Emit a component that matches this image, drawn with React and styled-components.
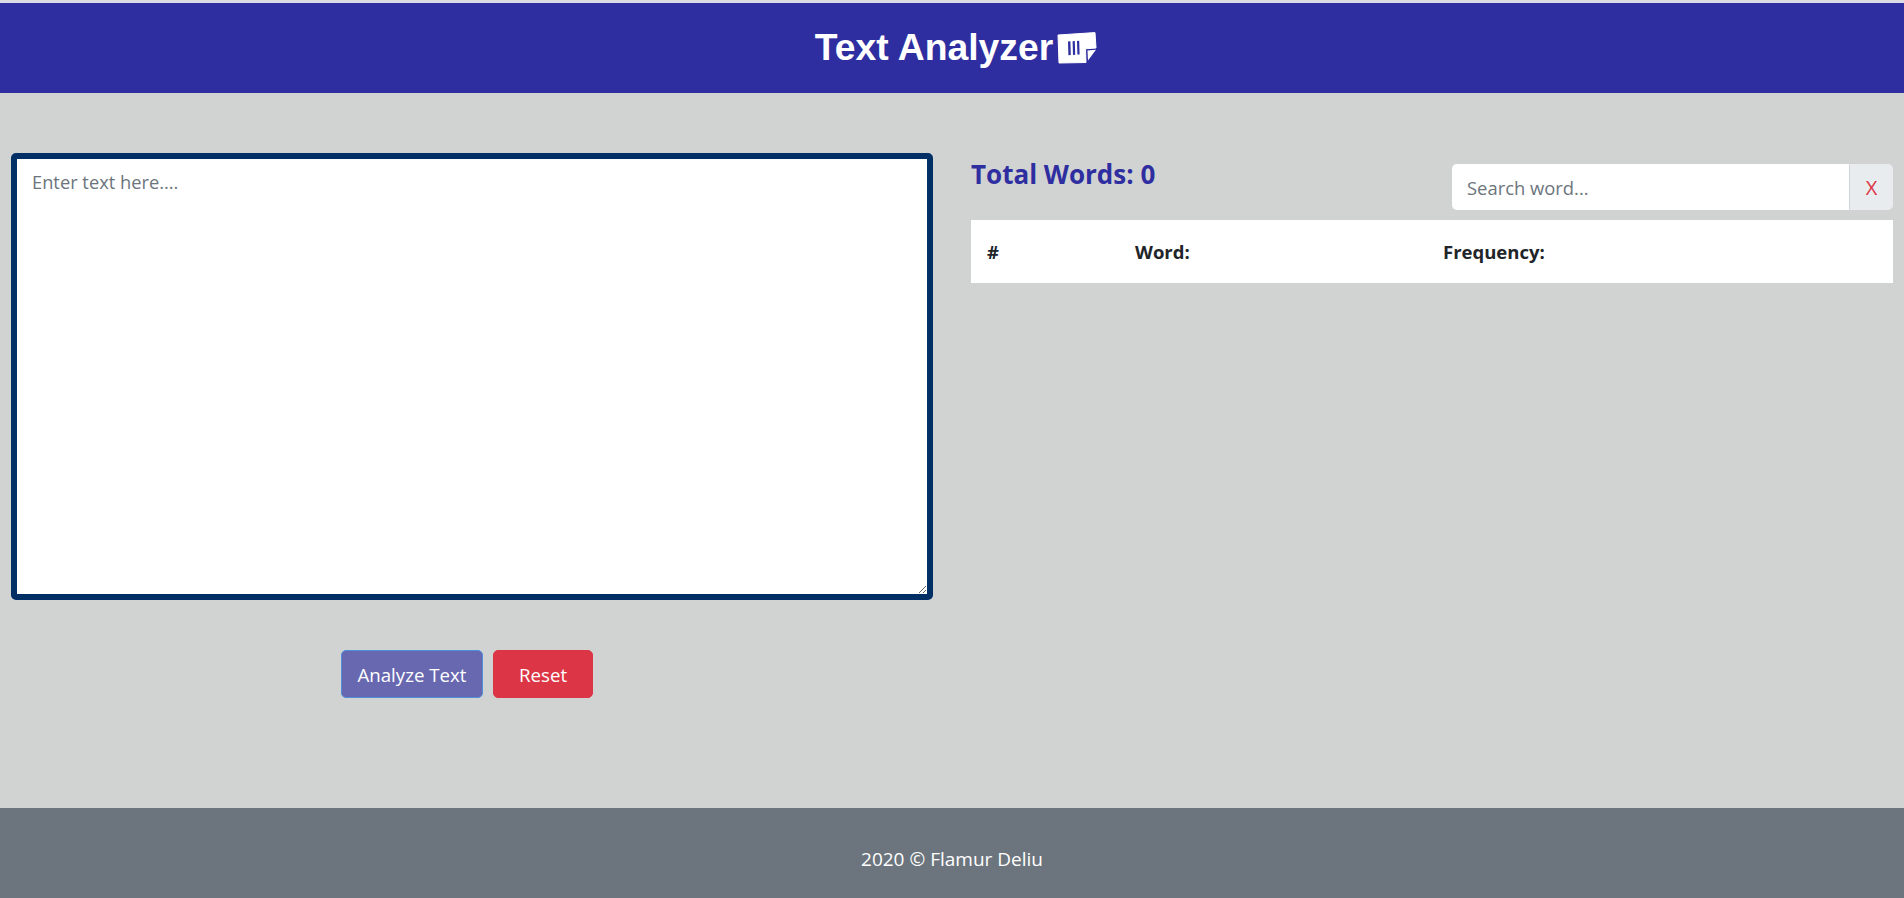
import React from 'react';
import styled, { createGlobalStyle } from 'styled-components';

const GlobalStyle = createGlobalStyle`
  * {
    box-sizing: border-box;
  }
  body {
    margin: 0;
    background-color: #d1d3d3;
    font-family: "Open Sans", "Noto Sans", sans-serif;
    color: #212529;
  }
`;

const Page = styled.div`
  display: flex;
  flex-direction: column;
  height: 898px;
  overflow: hidden;
  border-top: 3px solid #dcdce4;
`;

const Header = styled.header`
  display: flex;
  justify-content: center;
  align-items: center;
  gap: 4px;
  height: 90px;
  padding-left: 8px;
  background-color: #2e2ea0;
`;

const Title = styled.h1`
  margin: 0;
  font-family: "Liberation Sans", Arial, sans-serif;
  font-size: 37.3px;
  font-weight: 700;
  line-height: 1;
  color: #fff;
`;

const Main = styled.main`
  flex: 1;
  display: grid;
  grid-template-columns: 952px 952px;
`;

const LeftColumn = styled.section`
  padding: 60px 19px 0 11px;
`;

const TextBox = styled.textarea`
  display: block;
  width: 922px;
  height: 447px;
  padding: 9px 15px;
  border: 6px solid #002f66;
  border-radius: 5px;
  outline: none;
  background-color: #fff;
  font-family: inherit;
  font-size: 18.3px;
  line-height: 1.5;
  color: #495057;

  &::placeholder {
    color: #6c757d;
  }
`;

const Actions = styled.div`
  display: flex;
  justify-content: center;
  gap: 10px;
  margin-top: 50px;
  padding-right: 10px;
`;

const Button = styled.button`
  width: ${(props) => props.$width}px;
  height: 48px;
  border: 1px solid ${(props) => props.$border};
  border-radius: 5px;
  background-color: ${(props) => props.$bg};
  font-family: inherit;
  font-size: 18.7px;
  color: #fff;
`;

const RightColumn = styled.section`
  padding: 60px 11px 0 19px;
`;

const ResultsTop = styled.div`
  display: flex;
  justify-content: space-between;
  align-items: flex-start;
  height: 67px;
`;

const Total = styled.h2`
  margin: 6px 0 0;
  font-size: 26px;
  font-weight: 700;
  line-height: 1.2;
  color: #2e2ea0;
`;

const SearchGroup = styled.div`
  display: flex;
  width: 441px;
  height: 46px;
  margin-top: 11px;
`;

const SearchInput = styled.input`
  flex: 1;
  min-width: 0;
  padding: 6px 14px;
  border: 1px solid;
  border-radius: 5px 0 0 5px;
  border-color: #fff #ced4da #fff #fff;
  outline: none;
  background-color: #fff;
  font-family: inherit;
  font-size: 18.4px;

  &::placeholder {
    color: #6c757d;
  }
`;

const ClearAddon = styled.span`
  display: flex;
  justify-content: center;
  align-items: center;
  width: 43px;
  border-radius: 0 5px 5px 0;
  background-color: #e9ecef;
  font-size: 20px;
  color: #dc3545;
`;

const WordTable = styled.table`
  width: 922px;
  border-collapse: collapse;
  background-color: #fff;
`;

const HeadCell = styled.th`
  width: ${(props) => props.$width}px;
  height: 63px;
  padding: 0 16px;
  font-size: 18.5px;
  font-weight: 700;
  text-align: left;
`;

const Footer = styled.footer`
  display: flex;
  justify-content: center;
  align-items: center;
  height: 90px;
  padding-top: 11px;
  background-color: #6c757d;
  font-size: 19px;
  color: #fff;
`;

const NoteIcon = () => (
  <svg width="40" height="32" viewBox="0 0 40 32" aria-hidden="true">
    <path
      d="M1 3 38 0.6 39 16 28.5 16.8 29 30.5 2 31Z"
      fill="#fff"
      stroke="#fff"
      strokeLinejoin="round"
    />
    <path d="M30.5 18.5 39 17.8 31 28.5Z" fill="#fff" />
    <path
      d="M11 9.5l2.4-.2.4 13.7-2.4.2zM15.6 9.2l2.2-.2.4 13.7-2.2.2zM20 8.9l2.2-.2.4 13.7-2.2.2z"
      fill="#2e2ea0"
    />
  </svg>
);

const App = () => {
  return (
    <>
      <GlobalStyle />
      <Page>
        <Header>
          <Title>Text Analyzer</Title>
          <NoteIcon />
        </Header>
        <Main>
          <LeftColumn>
            <TextBox placeholder="Enter text here...." />
            <Actions>
              <Button $width={142} $bg="#6868b0" $border="#4d8fdc">
                Analyze Text
              </Button>
              <Button $width={100} $bg="#dc3545" $border="#dc3545">
                Reset
              </Button>
            </Actions>
          </LeftColumn>
          <RightColumn>
            <ResultsTop>
              <Total>Total Words: 0</Total>
              <SearchGroup>
                <SearchInput placeholder="Search word..." />
                <ClearAddon>X</ClearAddon>
              </SearchGroup>
            </ResultsTop>
            <WordTable>
              <thead>
                <tr>
                  <HeadCell $width={148}>#</HeadCell>
                  <HeadCell $width={308}>Word:</HeadCell>
                  <HeadCell>Frequency:</HeadCell>
                </tr>
              </thead>
            </WordTable>
          </RightColumn>
        </Main>
        <Footer>2020 © Flamur Deliu</Footer>
      </Page>
    </>
  );
};

export default App;
